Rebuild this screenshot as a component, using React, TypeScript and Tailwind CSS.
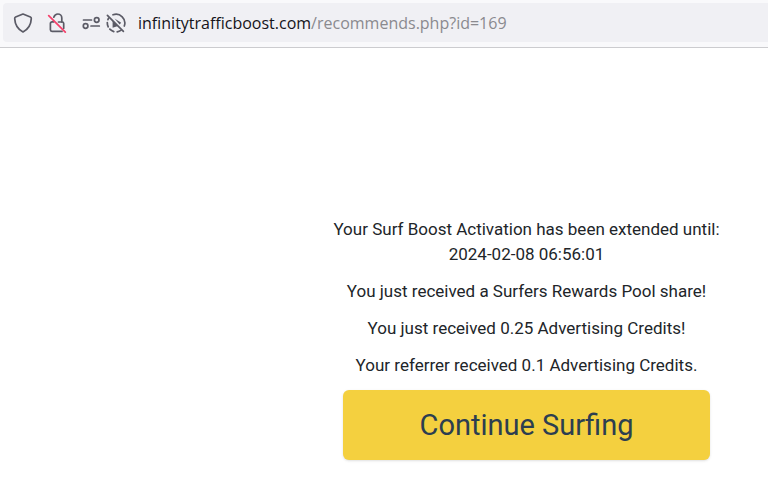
const notices = [
  'You just received a Surfers Rewards Pool share!',
  'You just received 0.25 Advertising Credits!',
  'Your referrer received 0.1 Advertising Credits.',
];

const iconButton = 'flex items-center justify-center text-[#5b5b66]';

function ShieldIcon() {
  return (
    <svg width="20" height="20" viewBox="0 0 20 20" fill="none" stroke="currentColor" strokeWidth="1.7" strokeLinejoin="round">
      <path d="M10 1 L17.4 4 Q18.4 4.5 18.3 5.6 C18 12 15.6 16 10 19 C4.4 16 2 12 1.7 5.6 Q1.6 4.5 2.6 4 Z" />
    </svg>
  );
}

function InsecureLockIcon() {
  return (
    <svg width="20" height="20" viewBox="0 0 20 20" fill="none" stroke="currentColor" strokeWidth="1.7" strokeLinecap="round">
      <path d="M6.8 4.2C7.6 2 9 1 10.8 1a4 4 0 0 1 4 4V9" />
      <path d="M6.8 8.8H5a1.6 1.6 0 0 0-1.6 1.6v6.4A1.6 1.6 0 0 0 5 18.4h10M11.5 9h3.6a1.6 1.6 0 0 1 1.6 1.6v4.6" />
      <path d="M1.7 2.6 18.3 19.2" stroke="#f5426c" />
    </svg>
  );
}

function PermissionsIcon() {
  return (
    <svg width="20" height="20" viewBox="0 0 20 20" fill="none" stroke="currentColor" strokeWidth="1.7" strokeLinecap="round">
      <path d="M2.5 7h8M10 13h8.3" />
      <circle cx="15.7" cy="7" r="2.3" />
      <circle cx="4.6" cy="13" r="2.3" />
    </svg>
  );
}

function AutoplayBlockedIcon() {
  return (
    <svg width="20" height="20" viewBox="0 0 20 20" fill="none" stroke="currentColor" strokeWidth="1.7" strokeLinecap="round">
      <path d="M7 1.8A8.8 8.8 0 0 1 18.3 13" />
      <path d="M14.9 17.4A8.8 8.8 0 0 1 11.2 18.8M7.8 18.6A8.8 8.8 0 0 1 3.8 16.2M2.2 13.8A8.8 8.8 0 0 1 1.3 9.5M1.9 6.7 2.6 5.2" />
      <path d="M8.6 5.6 15.2 9.8 13.6 11.6ZM6.6 7.6 12 13 6.6 14.8Z" fill="currentColor" stroke="none" />
      <path d="M1.4 2.4 17.4 18.4" />
    </svg>
  );
}

export default function App() {
  return (
    <div className="min-h-screen bg-white">
      {/* Address bar */}
      <header className="border-b border-[#cccccf] bg-[#f9f9fb] pt-[3px] pb-[5px] pl-[3px]">
        <div className="flex h-[39px] items-center rounded-l bg-[#f0f0f4] pl-[10px]">
          <button type="button" aria-label="Tracking protection" className={iconButton}>
            <ShieldIcon />
          </button>
          <button type="button" aria-label="Connection not secure" className={`${iconButton} ml-[14px]`}>
            <InsecureLockIcon />
          </button>
          <button type="button" aria-label="Site permissions" className={`${iconButton} ml-[14px]`}>
            <PermissionsIcon />
          </button>
          <button type="button" aria-label="Autoplay blocked" className={`${iconButton} ml-[5px]`}>
            <AutoplayBlockedIcon />
          </button>
          <a
            href="#"
            className="ml-3 pt-px font-['Open_Sans','Noto_Sans',sans-serif] text-base whitespace-nowrap text-[#8a8a8f]"
          >
            <span className="text-[#15141a]">infinitytrafficboost.com</span>/recommends.php?id=169
          </a>
        </div>
      </header>

      {/* Surf rewards */}
      <main className="flex flex-col items-center pt-[169px] pl-[285px] text-center font-['Roboto',sans-serif] text-[17px] leading-[25px] font-normal text-[#212529]">
        <p className="mb-3">
          Your Surf Boost Activation has been extended until:
          <br />
          2024-02-08 06:56:01
        </p>
        {notices.map((notice) => (
          <p key={notice} className="mb-3">
            {notice}
          </p>
        ))}
        <button
          type="button"
          className="w-[76%] rounded-md bg-[#f4d03f] py-[15px] text-[29px] leading-10 text-[#2c3e50] shadow"
        >
          Continue Surfing
        </button>
      </main>
    </div>
  );
}
